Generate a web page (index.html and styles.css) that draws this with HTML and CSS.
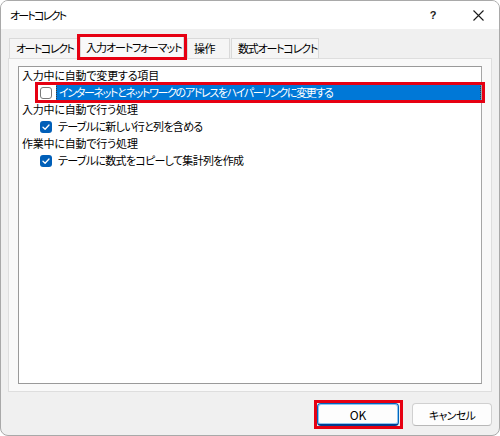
FILE: index.html
```html
<!DOCTYPE html>
<html lang="ja">
<head>
<meta charset="utf-8">
<title>オートコレクト</title>
<link rel="stylesheet" href="styles.css">
</head>
<body>
<div class="window">
  <div class="titlebar">
    <span class="title">オートコレクト</span>
    <span class="help">?</span>
    <span class="close"><svg width="11" height="11" viewBox="0 0 11 11"><path d="M0.5 0.5L10.5 10.5M10.5 0.5L0.5 10.5" stroke="#1a1a1a" stroke-width="1.1" fill="none"/></svg></span>
  </div>
  <div class="content">
    <div class="tabs">
      <div class="tab t1">オートコレクト</div>
      <div class="tab selected mark">入力オートフォーマット</div>
      <div class="tab t3">操作</div>
      <div class="tab t4">数式オートコレクト</div>
    </div>
    <div class="panel">
      <div class="listbox">
        <div class="group">入力中に自動で変更する項目</div>
        <div class="item focused mark">
          <span class="check"></span>
          <span class="label l1">インターネットとネットワークのアドレスをハイパーリンクに変更する</span>
        </div>
        <div class="group">入力中に自動で行う処理</div>
        <div class="item">
          <span class="check on"><svg width="12" height="12" viewBox="0 0 12 12"><path d="M3 6.2L5.1 8.2L9 4" stroke="#fff" stroke-width="1.3" fill="none" stroke-linecap="round" stroke-linejoin="round"/></svg></span>
          <span class="label l2">テーブルに新しい行と列を含める</span>
        </div>
        <div class="group">作業中に自動で行う処理</div>
        <div class="item">
          <span class="check on"><svg width="12" height="12" viewBox="0 0 12 12"><path d="M3 6.2L5.1 8.2L9 4" stroke="#fff" stroke-width="1.3" fill="none" stroke-linecap="round" stroke-linejoin="round"/></svg></span>
          <span class="label l2">テーブルに数式をコピーして集計列を作成</span>
        </div>
      </div>
    </div>
    <div class="footer">
      <button class="btn default mark">OK</button>
      <button class="btn cancel">キャンセル</button>
    </div>
  </div>
</div>
</body>
</html>
```
FILE: styles.css
```css
* { box-sizing: border-box; }
html, body { margin: 0; padding: 0; background: #ffffff; }
body {
  width: 500px;
  height: 436px;
  font-family: "Noto Sans CJK JP", "Noto Sans", sans-serif;
  font-size: 11px;
  font-feature-settings: "palt";
  color: #000;
}
.window {
  width: 500px;
  height: 436px;
  border: 1px solid #a9a9a9;
  border-radius: 8px;
  overflow: hidden;
  display: flex;
  flex-direction: column;
  background: #f0f0f0;
}
.titlebar {
  height: 28px;
  background: #ffffff;
  display: flex;
  align-items: center;
  padding-left: 9px;
  flex-shrink: 0;
}
.title { flex: 1; line-height: 14px; letter-spacing: -1.8px; }
.help {
  width: 12px;
  font-family: "Liberation Sans", sans-serif;
  font-weight: bold;
  font-size: 11px;
  color: #222;
  margin-right: 34px;
  text-align: center;
}
.close {
  display: flex;
  width: 11px;
  height: 11px;
  margin-right: 15px;
}
.content {
  flex: 1;
  display: flex;
  flex-direction: column;
  padding: 0 7px 0 7px;
}
.tabs {
  display: flex;
  align-items: flex-end;
  height: 29px;
  padding-left: 1px;
}
.tab {
  position: relative;
  height: 20px;
  line-height: 19px;
  padding: 0 0 0 6px;
  border: 1px solid #d9d9d9;
  border-bottom: none;
  background: #f5f5f5;
  white-space: nowrap;
  overflow: visible;
}
.t1 { width: 70px; margin-right: 1px; letter-spacing: -1.5px; }
.tab.selected {
  height: 25px;
  margin-bottom: -1px;
  line-height: 24px;
  padding-left: 5px;
  background: #f9f9f9;
  z-index: 2;
  width: 104px;
  margin-right: 3px;
  letter-spacing: -1.05px;
}
.t3 { width: 43px; margin-right: 1px; letter-spacing: -0.4px; }
.t4 { width: 88px; letter-spacing: -1.2px; }
.panel {
  height: 334px;
  background: #f9f9f9;
  border: 1px solid #dedede;
  padding: 7px 9px 7px 9px;
}
.listbox {
  height: 318px;
  background: #ffffff;
  border: 1px solid #9a9a9a;
  border-right-color: #a6a6a6;
  padding: 0 0 0 3px;
}
.group {
  height: 17px;
  line-height: 17px;
  letter-spacing: -0.2px;
}
.item {
  position: relative;
  height: 17px;
  display: flex;
  align-items: center;
  padding-left: 18px;
}
.check {
  width: 12px;
  height: 12px;
  border: 1px solid #7a7a7a;
  border-radius: 3px;
  background: #fff;
  flex-shrink: 0;
  margin-right: 4px;
  display: flex;
}
.check.on {
  border: none;
  background: #005fb8;
}
.label {
  line-height: 17px;
  padding: 0 3px 0 2px;
  white-space: nowrap;
}
.l1 { letter-spacing: -1.35px; }
.l2 { letter-spacing: -0.7px; }
.item.focused .label {
  flex: 1;
  background: #0078d7;
  color: #ffffff;
  height: 17px;
  border: 1px dotted #3a3a3a;
  line-height: 15px;
  padding-left: 2px;
}
.mark::after {
  content: "";
  position: absolute;
  border: 3px solid #e60012;
  pointer-events: none;
}
.item.mark::after { top: -2px; bottom: -2px; left: 13px; right: -4px; }
.tab.mark::after { top: -1px; bottom: -1px; left: -4px; right: -4px; }
.footer {
  flex: 1;
  display: flex;
  justify-content: flex-end;
  align-items: flex-start;
  padding-top: 11px;
  gap: 13px;
}
.btn {
  position: relative;
  font-family: "Noto Sans CJK JP", "Noto Sans", sans-serif;
  font-feature-settings: "palt";
  font-size: 11px;
  height: 23px;
  width: 80px;
  border: 1px solid #d0d0d0;
  border-bottom-color: #b8b8b8;
  border-radius: 4px;
  background: #fdfdfd;
  color: #000;
  padding: 0;
}
.cancel { letter-spacing: -0.7px; }
.btn.default {
  width: 82px;
  font-size: 12px;
  border: 1px solid #0067c0;
  border-bottom-width: 2px;
  border-bottom-color: #003e92;
  box-shadow: inset 0 0 0 1px #8ec5f0;
}
.btn.mark::after { top: -4px; bottom: -5px; left: -4px; right: -5px; }
```
